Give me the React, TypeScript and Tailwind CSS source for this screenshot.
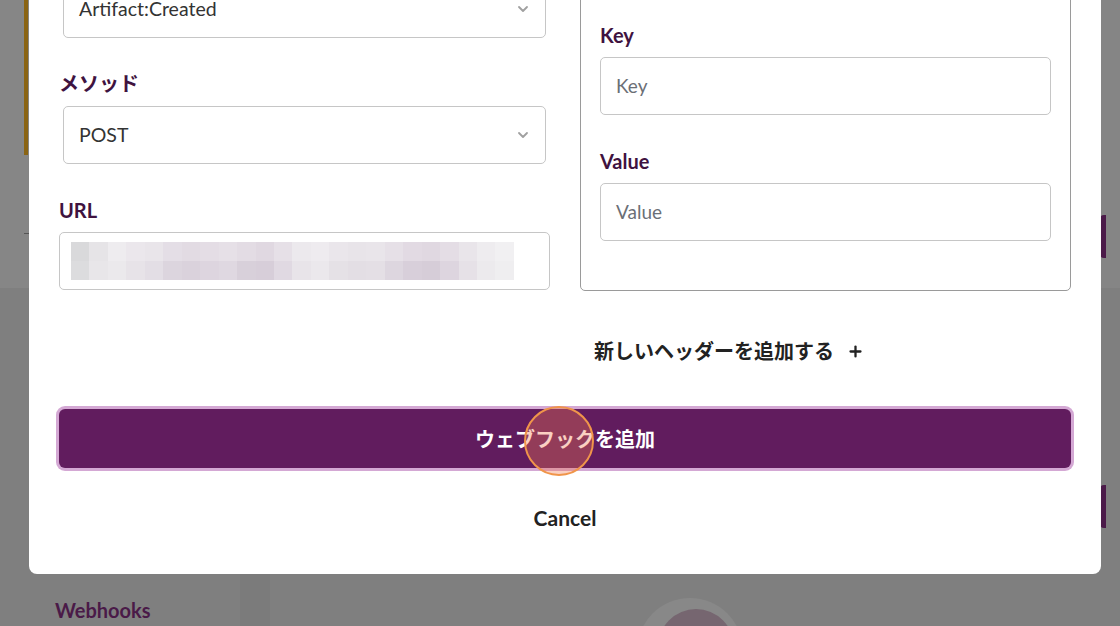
import { ChevronDown, Plus } from "lucide-react";

const blurCols = [
  ["#d9d9db", "#dcdcde"],
  ["#e6e4e7", "#e8e6e9"],
  ["#eeecef", "#ebe9ec"],
  ["#ebe7ec", "#e7e3e8"],
  ["#e9e5ea", "#e3dee5"],
  ["#e4dee6", "#dcd5de"],
  ["#e2dbe3", "#dad2dc"],
  ["#e4dde5", "#ddd5df"],
  ["#e6e0e7", "#dfd8e1"],
  ["#e3dce4", "#d8d0da"],
  ["#e0d8e1", "#d7ced9"],
  ["#e6e0e7", "#e0d9e2"],
  ["#ece9ed", "#e8e4e9"],
  ["#eeebef", "#ebe8ec"],
  ["#eae6eb", "#e5e1e6"],
  ["#e8e4e9", "#e3dee4"],
  ["#e9e5ea", "#e4dfe5"],
  ["#e6e0e7", "#ddd6df"],
  ["#e2dae3", "#d8cfda"],
  ["#e0d8e1", "#d6cdd8"],
  ["#e4dde5", "#ddd5df"],
  ["#e9e5ea", "#e6e1e7"],
  ["#eeecef", "#eceaed"],
  ["#f1f0f2", "#efeef0"],
];

const font = { fontFamily: "Lato, 'Noto Sans CJK JP', sans-serif" };

const Label = ({ children }: { children: React.ReactNode }) => (
  <div className="text-[20px] leading-6 font-bold text-[#3f1340]">{children}</div>
);

const SelectBox = ({ value }: { value: string }) => (
  <div className="mx-[4px] h-[58px] rounded-[5px] border border-[#c6c6c6] bg-white flex items-center justify-between pl-[15px] pr-[14px]">
    <span className="text-[19.5px] text-[#333]">{value}</span>
    <ChevronDown className="w-4 h-4 text-[#a0a0a0]" strokeWidth={2.75} />
  </div>
);

const TextInput = ({ placeholder }: { placeholder: string }) => (
  <div className="h-[58px] rounded-[5px] border border-[#c6c6c6] bg-white flex items-center px-[15px]">
    <span className="text-[19px] text-[#6b6f76]">{placeholder}</span>
  </div>
);

export default function App() {
  return (
    <div
      className="relative w-[1120px] h-[626px] overflow-hidden bg-[#7f7f7f]"
      style={font}
    >
      {/* dimmed page behind */}
      <div className="absolute left-0 top-0 w-[29px] h-[288px] bg-[#868686]" />
      <div className="absolute left-[24px] top-0 w-[4px] h-[155px] bg-[#8a6414]" />
      <div className="absolute left-[24px] top-[233px] w-[5px] h-[1px] bg-[#555]" />
      <div className="absolute right-0 top-0 w-[19px] h-[288px] bg-[#858585]" />
      <div className="absolute right-[14px] top-[215px] w-[6px] h-[43px] rounded-l-[4px] bg-[#4b1a49]" />
      <div className="absolute right-[14px] top-[485px] w-[6px] h-[43px] rounded-l-[4px] bg-[#4b1a49]" />
      <div className="absolute left-[240px] top-[574px] w-[30px] h-[52px] bg-[#7b7b7b]" />
      <div className="absolute left-[55px] top-[595px] text-[20px] font-bold text-[#4a1a48]">
        Webhooks
      </div>
      <div className="absolute left-[637px] top-[598px] w-[106px] h-[106px] rounded-full bg-[#888888]" />
      <div className="absolute left-[658px] top-[609px] w-[76px] h-[76px] rounded-full bg-[#766670]" />

      {/* modal */}
      <div className="absolute left-[29px] top-[-40px] w-[1072px] h-[614px] bg-white rounded-[8px] px-[30px] pt-[20px]">
        <div className="grid grid-cols-2 gap-[30px]">
          <div className="flex flex-col">
            <SelectBox value="Artifact:Created" />
            <div className="mt-[33px]">
              <Label>メソッド</Label>
            </div>
            <div className="mt-[11px]">
              <SelectBox value="POST" />
            </div>
            <div className="mt-[34px]">
              <Label>URL</Label>
            </div>
            <div className="mt-[10px] h-[58px] rounded-[5px] border border-[#c6c6c6] bg-white flex items-center px-[11px]">
              <div className="flex h-[38px] w-[443px]">
                {blurCols.map((c, i) => (
                  <div key={i} className="flex-1 flex flex-col">
                    <div className="flex-1" style={{ backgroundColor: c[0] }} />
                    <div className="flex-1" style={{ backgroundColor: c[1] }} />
                  </div>
                ))}
              </div>
            </div>
          </div>

          <div className="rounded-[5px] border border-[#9a9a9a] px-[19px] pt-[42px] pb-[49px] flex flex-col">
            <Label>Key</Label>
            <div className="mt-[10px]">
              <TextInput placeholder="Key" />
            </div>
            <div className="mt-[34px]">
              <Label>Value</Label>
            </div>
            <div className="mt-[10px]">
              <TextInput placeholder="Value" />
            </div>
          </div>
        </div>

        <div className="grid grid-cols-2 gap-[30px] mt-[48px]">
          <div />
          <div className="pl-[14px] flex items-center gap-[13px] text-[20px] leading-6 font-bold text-[#222]">
            <span>新しいヘッダーを追加する</span>
            <Plus className="w-[17px] h-[17px]" strokeWidth={3.25} />
          </div>
        </div>

        <div className="relative mt-[46px] h-[59px] rounded-[6px] bg-[#611c5e] ring-[3px] ring-[#d4a8d4] flex items-center justify-center">
          <span className="text-[20px] font-bold text-white">ウェブフックを追加</span>
          <div className="absolute left-[465px] top-[-3px] w-[70px] h-[70px] rounded-full border-2 border-[#f0954a] bg-[#f07850]/35" />
        </div>

        <div className="mt-[38px] flex justify-center text-[21px] leading-6 font-bold text-[#222]">
          Cancel
        </div>
      </div>
    </div>
  );
}
